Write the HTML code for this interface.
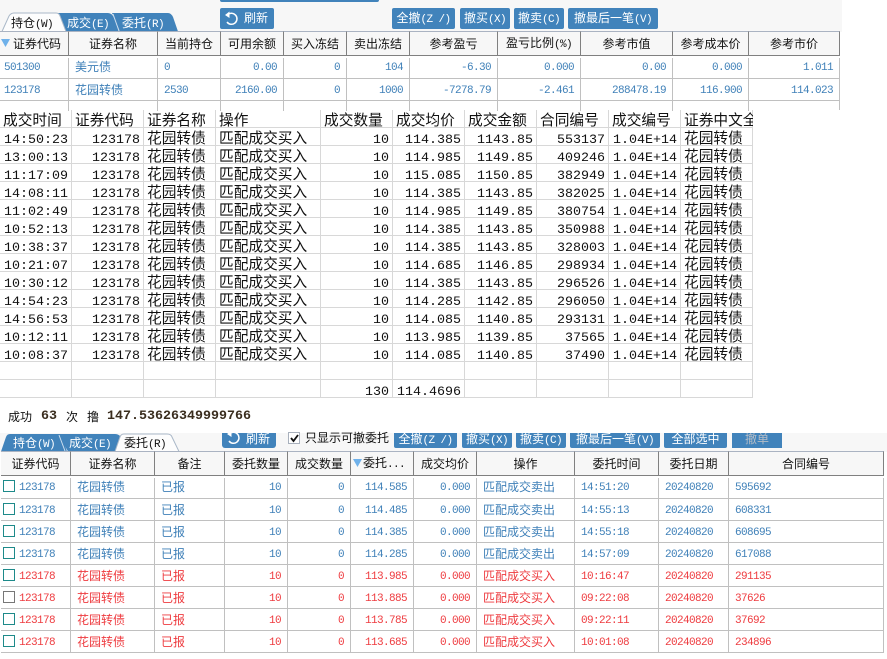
<!DOCTYPE html>
<html><head><meta charset="utf-8"><style>
html,body{margin:0;padding:0;background:#fff}
body{width:887px;height:659px;overflow:hidden;position:relative;font-family:"Liberation Sans","WenQuanYi Zen Hei","Noto Sans CJK SC",sans-serif}
.a{position:absolute}
table{border-collapse:separate;border-spacing:0;table-layout:fixed;position:absolute}
td,th{box-sizing:border-box;overflow:hidden;white-space:nowrap;padding:0;font-weight:normal}
.m{font-family:"Liberation Mono","WenQuanYi Zen Hei",monospace;font-size:11px;letter-spacing:-.6px}
.btn{position:absolute;background:#4183bb;color:#fff;font-size:12px;text-align:center;border-radius:2px;overflow:hidden;line-height:20px;white-space:nowrap}
.t1 th,.t3 th{height:25px;background:#f7f7f7;border-right:1px solid #808080;border-top:1px solid #aab3c2;border-bottom:1px solid #808080;font-size:12px;color:#111;text-align:center;line-height:20px}
.t1 td,.t3 td{height:22px;border-right:1px solid #c0c0c0;border-bottom:1px solid #c0c0c0;font-size:12px;color:#3f80b8;line-height:19px;padding-top:2px;vertical-align:top;background:#fff}
.t1 tr.f td,.t3 tr.f td{height:23px}
.t1 td.n,.t3 td.n,.t1 td.d,.t3 td.d{font-family:"Liberation Mono",monospace;font-size:11px;letter-spacing:-.6px;padding-top:4px;line-height:17px}
.t1 td.n,.t3 td.n{text-align:right;padding-right:6px}
.t1 td.l,.t3 td.l{padding-left:6px}
.t1 td.d,.t3 td.d{padding-left:6px}
.t3 tr.r td{color:#ee3b3f}
.t2 td,.t2 th{height:18px;border-right:1px solid #d8d8d8;border-bottom:1px solid #d8d8d8;font-size:14.7px;color:#111;line-height:11px;text-align:left;padding-left:3px;padding-top:6px;vertical-align:top;overflow:visible}
.t2 td.n{font-family:"Liberation Mono",monospace;font-size:13.33px;text-align:right;padding-left:0;padding-right:3px;padding-top:8px;line-height:9px}
.t2 td.c{font-family:"Liberation Mono",monospace;font-size:13.33px;text-align:center;padding-left:1px;padding-top:8px;line-height:9px}
.chk{display:inline-block;box-sizing:border-box;width:12px;height:12px;border:1px solid #1d8a8a;vertical-align:-2px;margin:0 4px 0 0;background:#fff}
</style></head><body>

<div class="a" style="left:0;top:0;width:842px;height:32px;background:#f7f7f7"></div>
<div class="a" style="left:220px;top:0;width:159px;height:2px;background:#4183bb;border-radius:0 0 2px 2px"></div>

<svg class="a" style="left:0;top:10px" width="190" height="22" font-size="12">
<path d="M57 3 L108 3 Q112 3 114 8 L120 21.500 L66 21.500 Z" fill="#4183bb"/>
<path d="M112 3 L168 3 Q171 3 173 7 L178 21.500 L120 21.500 Z" fill="#4183bb"/>
<path d="M113 4 L119 21" stroke="#cfe0ef" fill="none"/>
<path d="M2 21.500 L9 6 Q11 3 14 3 L56 3 Q59 3 60 6 L66 21.500 Z" fill="#fdfdfd" stroke="#aab8c8"/>
<text x="11" y="17" fill="#111">持仓<tspan font-family="Liberation Mono" font-size="11" letter-spacing="-.6">(W)</tspan></text>
<text x="67" y="17" fill="#fff">成交<tspan font-family="Liberation Mono" font-size="11" letter-spacing="-.6">(E)</tspan></text>
<text x="122" y="17" fill="#fff">委托<tspan font-family="Liberation Mono" font-size="11" letter-spacing="-.6">(R)</tspan></text>
</svg>

<div class="btn" style="left:220px;top:8px;width:54px;height:21px"><svg class="a" style="left:4px;top:3px" width="15" height="15" viewBox="0 0 15 15"><path d="M4 3.500 A5.500 5.500 0 1 1 3 11" fill="none" stroke="#fff" stroke-width="1.500"/><path d="M1 4 L5.500 0.500 L5.500 7 Z" fill="#fff"/></svg><span style="margin-left:18px">刷新</span></div>
<div class="btn" style="left:392px;top:8px;width:63px;height:21px">全撤<span class="m">(Z /)</span></div>
<div class="btn" style="left:460px;top:8px;width:50px;height:21px">撤买<span class="m">(X)</span></div>
<div class="btn" style="left:514px;top:8px;width:50px;height:21px">撤卖<span class="m">(C)</span></div>
<div class="btn" style="left:568px;top:8px;width:90px;height:21px">撤最后一笔<span class="m">(V)</span></div>

<table class="t1" style="left:0;top:31px;width:840px">
<colgroup><col style="width:69px"><col style="width:89px"><col style="width:63px"><col style="width:63px"><col style="width:63px"><col style="width:63px"><col style="width:88px"><col style="width:83px"><col style="width:92px"><col style="width:76px"><col style="width:91px"></colgroup>
<tr><th style="text-align:right;padding-right:7px">证券代码</th><th>证券名称</th><th>当前持仓</th><th>可用余额</th><th>买入冻结</th><th>卖出冻结</th><th>参考盈亏</th><th>盈亏比例<span class="m">(%)</span></th><th>参考市值</th><th>参考成本价</th><th>参考市价</th></tr>
<tr class="f"><td class="d" style="padding-left:4px">501300</td><td class="l">美元债</td><td class="d">0</td><td class="n">0.00</td><td class="n">0</td><td class="n">104</td><td class="n">-6.30</td><td class="n">0.000</td><td class="n">0.00</td><td class="n">0.000</td><td class="n">1.011</td></tr>
<tr><td class="d" style="padding-left:4px">123178</td><td class="l">花园转债</td><td class="d">2530</td><td class="n">2160.00</td><td class="n">0</td><td class="n">1000</td><td class="n">-7278.79</td><td class="n">-2.461</td><td class="n">288478.19</td><td class="n">116.900</td><td class="n">114.023</td></tr>
<tr><td style="height:10px;border-bottom:0;padding:0"></td><td style="height:10px;border-bottom:0;padding:0"></td><td style="height:10px;border-bottom:0;padding:0"></td><td style="height:10px;border-bottom:0;padding:0"></td><td style="height:10px;border-bottom:0;padding:0"></td><td style="height:10px;border-bottom:0;padding:0"></td><td style="height:10px;border-bottom:0;padding:0"></td><td style="height:10px;border-bottom:0;padding:0"></td><td style="height:10px;border-bottom:0;padding:0"></td><td style="height:10px;border-bottom:0;padding:0"></td><td style="height:10px;border-bottom:0;padding:0"></td></tr>
</table>
<div class="a" style="left:0;top:56px;width:842px;height:2px;background:#fff"></div>
<svg class="a" style="left:1px;top:39px" width="10" height="8"><path d="M0 0H9L4.500 8Z" fill="#6fb1ea"/></svg>

<table class="t2" style="left:0;top:110px;width:753px">
<colgroup><col style="width:72px"><col style="width:72px"><col style="width:72px"><col style="width:105px"><col style="width:72px"><col style="width:72px"><col style="width:72px"><col style="width:72px"><col style="width:72px"><col style="width:72px"></colgroup>
<tr><th>成交时间</th><th>证券代码</th><th>证券名称</th><th>操作</th><th>成交数量</th><th>成交均价</th><th>成交金额</th><th>合同编号</th><th>成交编号</th><th>证券中文全称</th></tr>
<tr><td class="c">14:50:23</td><td class="n">123178</td><td>花园转债</td><td>匹配成交买入</td><td class="n">10</td><td class="n">114.385</td><td class="n">1143.85</td><td class="n">553137</td><td class="n">1.04E+14</td><td>花园转债</td></tr>
<tr><td class="c">13:00:13</td><td class="n">123178</td><td>花园转债</td><td>匹配成交买入</td><td class="n">10</td><td class="n">114.985</td><td class="n">1149.85</td><td class="n">409246</td><td class="n">1.04E+14</td><td>花园转债</td></tr>
<tr><td class="c">11:17:09</td><td class="n">123178</td><td>花园转债</td><td>匹配成交买入</td><td class="n">10</td><td class="n">115.085</td><td class="n">1150.85</td><td class="n">382949</td><td class="n">1.04E+14</td><td>花园转债</td></tr>
<tr><td class="c">14:08:11</td><td class="n">123178</td><td>花园转债</td><td>匹配成交买入</td><td class="n">10</td><td class="n">114.385</td><td class="n">1143.85</td><td class="n">382025</td><td class="n">1.04E+14</td><td>花园转债</td></tr>
<tr><td class="c">11:02:49</td><td class="n">123178</td><td>花园转债</td><td>匹配成交买入</td><td class="n">10</td><td class="n">114.985</td><td class="n">1149.85</td><td class="n">380754</td><td class="n">1.04E+14</td><td>花园转债</td></tr>
<tr><td class="c">10:52:13</td><td class="n">123178</td><td>花园转债</td><td>匹配成交买入</td><td class="n">10</td><td class="n">114.385</td><td class="n">1143.85</td><td class="n">350988</td><td class="n">1.04E+14</td><td>花园转债</td></tr>
<tr><td class="c">10:38:37</td><td class="n">123178</td><td>花园转债</td><td>匹配成交买入</td><td class="n">10</td><td class="n">114.385</td><td class="n">1143.85</td><td class="n">328003</td><td class="n">1.04E+14</td><td>花园转债</td></tr>
<tr><td class="c">10:21:07</td><td class="n">123178</td><td>花园转债</td><td>匹配成交买入</td><td class="n">10</td><td class="n">114.685</td><td class="n">1146.85</td><td class="n">298934</td><td class="n">1.04E+14</td><td>花园转债</td></tr>
<tr><td class="c">10:30:12</td><td class="n">123178</td><td>花园转债</td><td>匹配成交买入</td><td class="n">10</td><td class="n">114.385</td><td class="n">1143.85</td><td class="n">296526</td><td class="n">1.04E+14</td><td>花园转债</td></tr>
<tr><td class="c">14:54:23</td><td class="n">123178</td><td>花园转债</td><td>匹配成交买入</td><td class="n">10</td><td class="n">114.285</td><td class="n">1142.85</td><td class="n">296050</td><td class="n">1.04E+14</td><td>花园转债</td></tr>
<tr><td class="c">14:56:53</td><td class="n">123178</td><td>花园转债</td><td>匹配成交买入</td><td class="n">10</td><td class="n">114.085</td><td class="n">1140.85</td><td class="n">293131</td><td class="n">1.04E+14</td><td>花园转债</td></tr>
<tr><td class="c">10:12:11</td><td class="n">123178</td><td>花园转债</td><td>匹配成交买入</td><td class="n">10</td><td class="n">113.985</td><td class="n">1139.85</td><td class="n">37565</td><td class="n">1.04E+14</td><td>花园转债</td></tr>
<tr><td class="c">10:08:37</td><td class="n">123178</td><td>花园转债</td><td>匹配成交买入</td><td class="n">10</td><td class="n">114.085</td><td class="n">1140.85</td><td class="n">37490</td><td class="n">1.04E+14</td><td>花园转债</td></tr>
<tr><td></td><td></td><td></td><td></td><td></td><td></td><td></td><td></td><td></td><td></td></tr>
<tr><td></td><td></td><td></td><td></td><td class="n">130</td><td class="n">114.4696</td><td></td><td></td><td></td><td></td></tr>
</table>
<div class="a" style="left:753px;top:110px;width:140px;height:300px;background:#fff"></div>

<div class="a" style="left:8px;top:409px;font-size:12px;line-height:16px;color:#111;white-space:nowrap">成功</div>
<div class="a" style="left:41px;top:409px;font-size:13.33px;line-height:16px;font-family:'Liberation Mono',monospace;font-weight:bold;color:#3a2d1e">63</div>
<div class="a" style="left:66px;top:409px;font-size:12px;line-height:16px;color:#111">次</div>
<div class="a" style="left:87px;top:409px;font-size:12px;line-height:16px;color:#111">撸</div>
<div class="a" style="left:107px;top:409px;font-size:13.33px;line-height:16px;font-family:'Liberation Mono',monospace;font-weight:bold;color:#3a2d1e">147.53626349999766</div>

<div class="a" style="left:0;top:433px;width:887px;height:19px;background:#f7f7f7"></div>
<svg class="a" style="left:0;top:431px" width="190" height="21" font-size="12">
<path d="M1 20.500 L6 6 Q7 3 10 3 L58 3 Q61 3 62 6 L67 20.500 Z" fill="#4183bb"/>
<path d="M58 3 L115 3 Q118 3 120 5 L115 20.500 L68 20.500 Z" fill="#4183bb"/>
<path d="M59 4 L65 20" stroke="#cfe0ef" fill="none"/>
<path d="M115 20.500 L120 6 Q121 3 124 3 L167 3 Q171 3 172 6 L179 20.500 Z" fill="#fdfdfd" stroke="#aab8c8"/>
<text x="13" y="16" fill="#fff">持仓<tspan font-family="Liberation Mono" font-size="11" letter-spacing="-.6">(W)</tspan></text>
<text x="69" y="16" fill="#fff">成交<tspan font-family="Liberation Mono" font-size="11" letter-spacing="-.6">(E)</tspan></text>
<text x="124" y="16" fill="#111">委托<tspan font-family="Liberation Mono" font-size="11" letter-spacing="-.6">(R)</tspan></text>
</svg>

<div class="btn" style="left:222px;top:433px;width:54px;height:15px;line-height:12px;border-radius:0 0 3px 3px"><svg class="a" style="left:4px;top:-3px" width="15" height="15" viewBox="0 0 15 15"><path d="M4 3.500 A5.500 5.500 0 1 1 3 11" fill="none" stroke="#fff" stroke-width="1.500"/><path d="M1 4 L5.500 0.500 L5.500 7 Z" fill="#fff"/></svg><span style="margin-left:18px">刷新</span></div>
<div class="a" style="left:288px;top:432px;width:12px;height:12px;box-sizing:border-box;border:1px solid #a8b0bc;background:#fff"><svg class="a" style="left:1px;top:1px" width="9" height="9"><path d="M1 4 L3.500 7 L8 1" fill="none" stroke="#111" stroke-width="1.800"/></svg></div>
<div class="a" style="left:305px;top:430px;font-size:12px;line-height:16px;color:#111;white-space:nowrap">只显示可撤委托</div>
<div class="btn" style="left:394px;top:433px;width:63px;height:15px;line-height:12px;border-radius:0 0 2px 2px">全撤<span class="m">(Z /)</span></div>
<div class="btn" style="left:462px;top:433px;width:50px;height:15px;line-height:12px;border-radius:0 0 2px 2px">撤买<span class="m">(X)</span></div>
<div class="btn" style="left:516px;top:433px;width:50px;height:15px;line-height:12px;border-radius:0 0 2px 2px">撤卖<span class="m">(C)</span></div>
<div class="btn" style="left:570px;top:433px;width:90px;height:15px;line-height:12px;border-radius:0 0 2px 2px">撤最后一笔<span class="m">(V)</span></div>
<div class="btn" style="left:664px;top:433px;width:63px;height:15px;line-height:12px;border-radius:0 0 2px 2px">全部选中</div>
<div class="btn" style="left:732px;top:433px;width:50px;height:15px;line-height:12px;border-radius:0;color:#b4bcc6">撤单</div>

<table class="t3" style="left:1px;top:451px;width:883px">
<colgroup><col style="width:70px"><col style="width:84px"><col style="width:70px"><col style="width:63px"><col style="width:63px"><col style="width:63px"><col style="width:63px"><col style="width:98px"><col style="width:84px"><col style="width:70px"><col style="width:155px"></colgroup>
<tr><th>证券代码</th><th>证券名称</th><th>备注</th><th>委托数量</th><th>成交数量</th><th style="text-align:right;padding-right:8px">委托<span class="m">...</span></th><th>成交均价</th><th>操作</th><th>委托时间</th><th>委托日期</th><th>合同编号</th></tr>
<tr class="f"><td class="d" style="padding-left:2px"><i class="chk"></i>123178</td><td class="l">花园转债</td><td class="l">已报</td><td class="n">10</td><td class="n">0</td><td class="n">114.585</td><td class="n">0.000</td><td class="l">匹配成交卖出</td><td class="d">14:51:20</td><td class="d">20240820</td><td class="d">595692</td></tr>
<tr><td class="d" style="padding-left:2px"><i class="chk"></i>123178</td><td class="l">花园转债</td><td class="l">已报</td><td class="n">10</td><td class="n">0</td><td class="n">114.485</td><td class="n">0.000</td><td class="l">匹配成交卖出</td><td class="d">14:55:13</td><td class="d">20240820</td><td class="d">608331</td></tr>
<tr><td class="d" style="padding-left:2px"><i class="chk"></i>123178</td><td class="l">花园转债</td><td class="l">已报</td><td class="n">10</td><td class="n">0</td><td class="n">114.385</td><td class="n">0.000</td><td class="l">匹配成交卖出</td><td class="d">14:55:18</td><td class="d">20240820</td><td class="d">608695</td></tr>
<tr><td class="d" style="padding-left:2px"><i class="chk"></i>123178</td><td class="l">花园转债</td><td class="l">已报</td><td class="n">10</td><td class="n">0</td><td class="n">114.285</td><td class="n">0.000</td><td class="l">匹配成交卖出</td><td class="d">14:57:09</td><td class="d">20240820</td><td class="d">617088</td></tr>
<tr class="r"><td class="d" style="padding-left:2px"><i class="chk"></i>123178</td><td class="l">花园转债</td><td class="l">已报</td><td class="n">10</td><td class="n">0</td><td class="n">113.985</td><td class="n">0.000</td><td class="l">匹配成交买入</td><td class="d">10:16:47</td><td class="d">20240820</td><td class="d">291135</td></tr>
<tr class="r"><td class="d" style="padding-left:2px"><i class="chk" style="border-color:#777"></i>123178</td><td class="l">花园转债</td><td class="l">已报</td><td class="n">10</td><td class="n">0</td><td class="n">113.885</td><td class="n">0.000</td><td class="l">匹配成交买入</td><td class="d">09:22:08</td><td class="d">20240820</td><td class="d">37626</td></tr>
<tr class="r"><td class="d" style="padding-left:2px"><i class="chk"></i>123178</td><td class="l">花园转债</td><td class="l">已报</td><td class="n">10</td><td class="n">0</td><td class="n">113.785</td><td class="n">0.000</td><td class="l">匹配成交买入</td><td class="d">09:22:11</td><td class="d">20240820</td><td class="d">37692</td></tr>
<tr class="r"><td class="d" style="padding-left:2px"><i class="chk"></i>123178</td><td class="l">花园转债</td><td class="l">已报</td><td class="n">10</td><td class="n">0</td><td class="n">113.685</td><td class="n">0.000</td><td class="l">匹配成交买入</td><td class="d">10:01:08</td><td class="d">20240820</td><td class="d">234896</td></tr>
</table>
<div class="a" style="left:0;top:476px;width:887px;height:2px;background:#fff"></div>
<svg class="a" style="left:353px;top:459px" width="10" height="8"><path d="M0 0H9L4.500 8Z" fill="#6fb1ea"/></svg>

</body></html>
